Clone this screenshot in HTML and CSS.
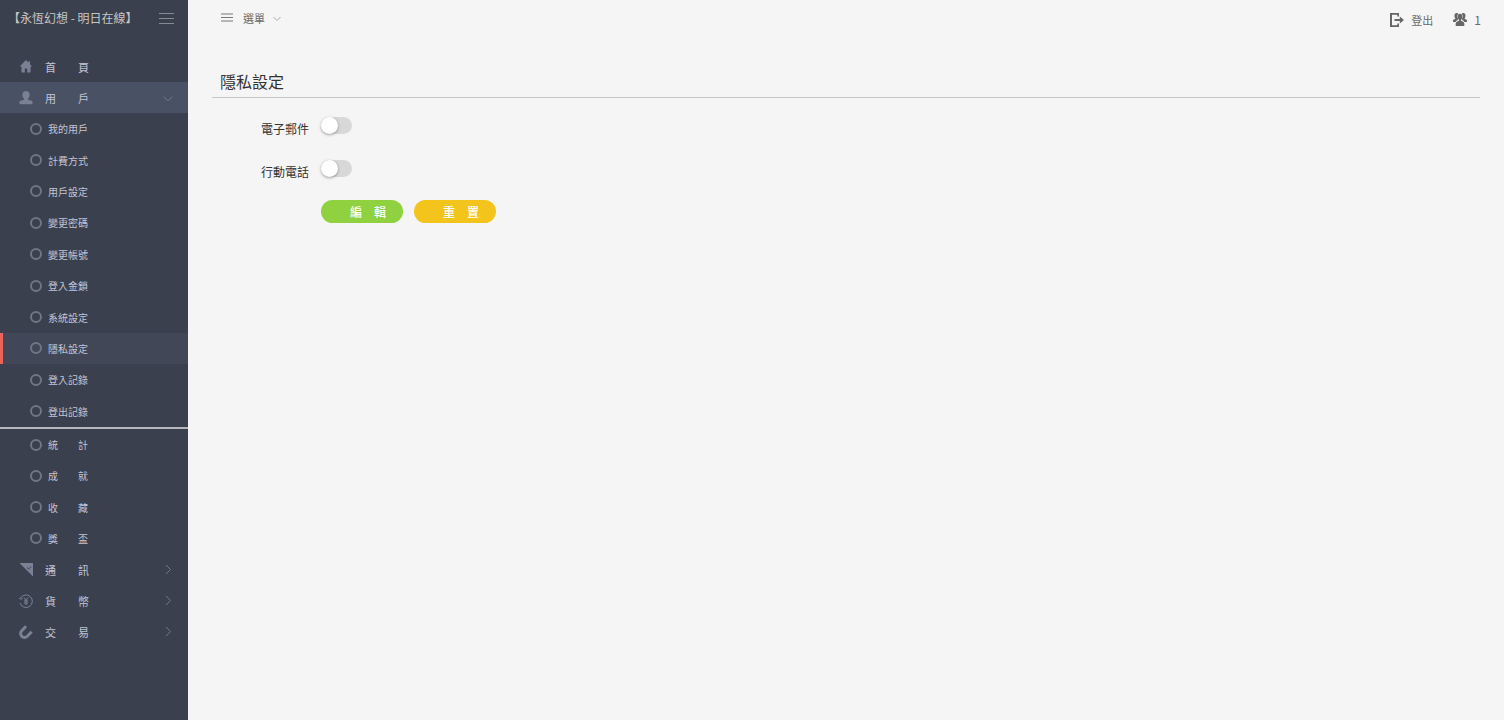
FILE: index.html
```
<!DOCTYPE html>
<html lang="zh-Hant">
<head>
    <meta charset="UTF-8">
    <meta name="viewport" content="width=device-width, initial-scale=1.0">
    <title>隱私設定</title>
    <link rel="stylesheet" href="styles.css">
</head>
<body>
    <aside class="sidebar">
        <div class="brand">
            <a href="#" class="brand-name">【永恆幻想 - 明日在線】</a>
            <button type="button" class="menu-toggle" aria-label="切換側欄">
                <svg width="15" height="11" viewBox="0 0 15 11"><path d="M0 .5h15M0 5.500h15M0 10.500h15"/></svg>
            </button>
        </div>

        <nav class="nav">
            <ul class="nav-list nav-top">
                <li><a href="#" class="nav-link">
                    <svg class="nav-icon" viewBox="0 0 14 14"><path d="M7 0 .8 6.500h1.700V12.500h3.300V8.500h2.400v4h3.300V6.500h1.700L11 4.300V1.300H9.500v1.400z"/></svg>
                    <span>首　　頁</span>
                </a></li>
                <li><a href="#" class="nav-link open">
                    <svg class="nav-icon" viewBox="0 0 14 14"><path d="M7 0c2.300 0 3.600 1.500 3.600 3.700 0 1.800-.7 3.200-1.700 4.100v.9l3.500 1c.9.4 1.300 1 1.300 1.900 0 1-.6 1.600-1.600 1.600H1.900C.9 13.200.3 12.600.3 11.600c0-.9.4-1.500 1.300-1.900l3.500-1v-.9C4.100 6.900 3.400 5.500 3.400 3.700 3.400 1.500 4.700 0 7 0z"/></svg>
                    <span>用　　戶</span>
                    <svg class="nav-arrow" viewBox="0 0 10 10"><path d="M.5 3.500 5 8 9.500 3.500"/></svg>
                </a></li>
            </ul>

            <ul class="nav-list sub-list sub-user">
                <li><a href="#" class="sub-link">我的用戶</a></li>
                <li><a href="#" class="sub-link">計費方式</a></li>
                <li><a href="#" class="sub-link">用戶設定</a></li>
                <li><a href="#" class="sub-link">變更密碼</a></li>
                <li><a href="#" class="sub-link">變更帳號</a></li>
                <li><a href="#" class="sub-link">登入金鎖</a></li>
                <li><a href="#" class="sub-link">系統設定</a></li>
                <li><a href="#" class="sub-link active">隱私設定</a></li>
                <li><a href="#" class="sub-link">登入記錄</a></li>
                <li><a href="#" class="sub-link">登出記錄</a></li>
            </ul>
            <hr class="divider">
            <ul class="nav-list sub-list sub-stats">
                <li><a href="#" class="sub-link">統　　計</a></li>
                <li><a href="#" class="sub-link">成　　就</a></li>
                <li><a href="#" class="sub-link">收　　藏</a></li>
                <li><a href="#" class="sub-link">獎　　盃</a></li>
            </ul>

            <ul class="nav-list nav-bottom">
                <li><a href="#" class="nav-link">
                    <svg class="nav-icon" viewBox="0 0 14 14"><path d="M.5 0h13.500v13.500z"/><path class="cut" d="M8 4.500l1.700 1.500 2.500-2.500"/></svg>
                    <span>通　　訊</span>
                    <svg class="nav-arrow" viewBox="0 0 10 10"><path d="M3 0 7.500 4.500 3 9"/></svg>
                </a></li>
                <li><a href="#" class="nav-link">
                    <svg class="nav-icon line" viewBox="0 0 14 14"><path d="M1.500 4.200A6.300 6.300 0 1 1 1 9M0 3.500l1.400 1.800L3.500 4.500M5 3.500l2 3 2-3M7 6.500v4.500M5 7h4M5 9h4"/></svg>
                    <span>貨　　幣</span>
                    <svg class="nav-arrow" viewBox="0 0 10 10"><path d="M3 0 7.500 4.500 3 9"/></svg>
                </a></li>
                <li><a href="#" class="nav-link">
                    <svg class="nav-icon magnet" viewBox="0 0 14 14"><path d="M7 1.300 2.800 5.700C-.8 9.800 4.600 14.700 8.500 11L12.700 6.700"/></svg>
                    <span>交　　易</span>
                    <svg class="nav-arrow" viewBox="0 0 10 10"><path d="M3 0 7.500 4.500 3 9"/></svg>
                </a></li>
            </ul>
        </nav>
    </aside>

    <div class="page">
        <header class="topbar">
            <button type="button" class="top-menu">
                <svg width="12" height="9" viewBox="0 0 12 9"><path d="M0 1h12M0 4.500h12M0 8h12"/></svg>
                <span>選單</span>
                <svg class="caret" width="8" height="8" viewBox="0 0 8 8"><path d="M.5 3 4 6.500 7.500 3"/></svg>
            </button>
            <div class="top-right">
                <a href="#" class="top-link">
                    <svg width="14" height="14" viewBox="0 0 14 14"><path d="M9 0H0v14h9v-3.500H7.300v1.700H2V1.800h5.300v1.700H9z"/><path d="M4.500 6h5.300V3.500L14 7l-4.200 3.500V8H4.500z"/></svg>
                    <span>登出</span>
                </a>
                <a href="#" class="top-link">
                    <svg width="14" height="13" viewBox="0 0 14 13"><path d="M3.500 0c1 0 1.500.4 1.700 1C4 2 4 4 5 5.500L4.800 7C3.600 7.500 3 8 2.800 9H0V7.500C0 6.500 1 6.300 2.500 5.700 1 4 1 0 3.500 0zM10.500 0c-1 0-1.500.4-1.700 1C10 2 10 4 9 5.500L9.200 7c1.200.5 1.800 1 2 2H14V7.500c0-1-1-1.200-2.500-1.800C13 4 13 0 10.500 0z"/><path d="M7 .8c1.600 0 2.300 1 2.300 2.600 0 1.500-.5 2.600-1.300 3.300v1.100c1.500.7 3.300 1.200 3.300 3V13H2.700v-2.200c0-1.800 1.800-2.300 3.300-3V6.700C5.200 6 4.700 4.900 4.700 3.400 4.700 1.800 5.400.8 7 .8z"/></svg>
                    <span class="count">1</span>
                </a>
            </div>
        </header>

        <main class="content">
            <h1>隱私設定</h1>
            <form class="settings">
                <label for="email">電子郵件</label>
                <input type="checkbox" id="email" class="switch">
                <label for="mobile">行動電話</label>
                <input type="checkbox" id="mobile" class="switch">
                <div class="actions">
                    <button type="submit" class="btn btn-edit">編　輯</button>
                    <button type="reset" class="btn btn-reset">重　置</button>
                </div>
            </form>
        </main>
    </div>
</body>
</html>
```
FILE: styles.css
```
*, *::before { box-sizing: border-box; }
body { display: flex; min-height: 100vh; margin: 0; background: #f5f5f5; color: #333; font-family: "Noto Sans CJK TC", sans-serif; font-size: 12px; }
a { color: inherit; text-decoration: none; }
button { padding: 0; border: 0; background: none; color: inherit; font: inherit; cursor: pointer; }
svg { flex: none; display: block; }

/* sidebar */
.sidebar { flex: none; width: 188px; background: #3a404e; color: #c3c4d6; }
.brand { display: flex; align-items: center; justify-content: space-between; height: 37px; padding: 0 14px 0 8px; }
.brand-name { padding-bottom: 2px; color: #c6c6c6; font-size: 12px; white-space: nowrap; }
.menu-toggle svg { fill: none; stroke: #858b93; }
.nav { padding-top: 14px; }
.nav-list { display: grid; grid-auto-rows: 1fr; margin: 0; padding: 0; list-style: none; }
.nav-list li { display: grid; }
.nav-top { height: 62px; }
.sub-user { height: 314px; }
.sub-stats { height: 125px; }
.nav-bottom { height: 94px; }
.nav-link { display: flex; align-items: center; gap: 12px; padding: 0 15px 0 19px; font-size: 11px; }
.nav-link.open { background: #495164; }
.nav-icon { width: 14px; height: 14px; fill: #7b8195; }
.nav-icon .cut { fill: none; stroke: #3a404e; }
.nav-icon.line { fill: none; stroke: #7b8195; }
.nav-icon.magnet { fill: none; stroke: #7b8195; stroke-width: 3; }
.nav-arrow { width: 10px; height: 10px; margin-left: auto; fill: none; stroke: #6d7889; }
.sub-link { display: flex; align-items: center; gap: 6px; padding-left: 30px; font-size: 10px; }
.sub-link::before { content: ""; width: 12px; height: 12px; border: 2px solid #6c7883; border-radius: 50%; }
.sub-link.active { padding-left: 27px; border-left: 3px solid #e8645a; background: #414757; }
.divider { height: 2px; margin: 0; border: 0; background: #b5b7bd; }

/* top bar */
.page { flex: 1; min-width: 0; }
.topbar { display: flex; justify-content: space-between; height: 39px; padding: 0 23px 0 33px; color: #6b6b6b; font-size: 11px; }
.top-menu { display: flex; align-items: center; gap: 8px; height: 35px; }
.top-menu svg { fill: none; stroke: #777; }
.top-menu span { margin-left: 2px; }
.top-menu .caret { stroke: #aaa; }
.top-right { display: flex; gap: 20px; }
.top-link { display: flex; align-items: center; gap: 7px; }
.top-link svg { fill: #666; }
.top-link .count { font-size: 12px; }

/* privacy form */
.content { padding: 28px 24px 24px; }
h1 { margin: 0; padding: 0 8px 2px; border-bottom: 1px solid #c8c8c8; font-size: 16px; font-weight: 400; line-height: 28px; }
.settings { display: grid; grid-template-columns: 97px 1fr; grid-template-rows: 43px 40px auto; column-gap: 12px; padding-top: 19px; }
.settings label { padding-top: 2px; line-height: 20px; text-align: right; }
.switch { appearance: none; position: relative; width: 31px; height: 17px; margin: 0; border-radius: 9px; background: #d8d8d8; cursor: pointer; }
.switch::before { content: ""; position: absolute; top: 0; left: 0; width: 17px; height: 17px; border-radius: 50%; background: #fff; box-shadow: 0 1px 3px rgba(0,0,0,0.35); }
.switch:checked { background: #8fd13f; }
.switch:checked::before { left: 14px; }
.actions { grid-column: 2; display: flex; gap: 11px; }
.btn { width: 82px; height: 23px; padding-left: 12px; border-radius: 12px; color: #fff; font-weight: 500; line-height: 23px; }
.btn-edit { background: #8fd13f; }
.btn-reset { background: #f3c41b; }
```
